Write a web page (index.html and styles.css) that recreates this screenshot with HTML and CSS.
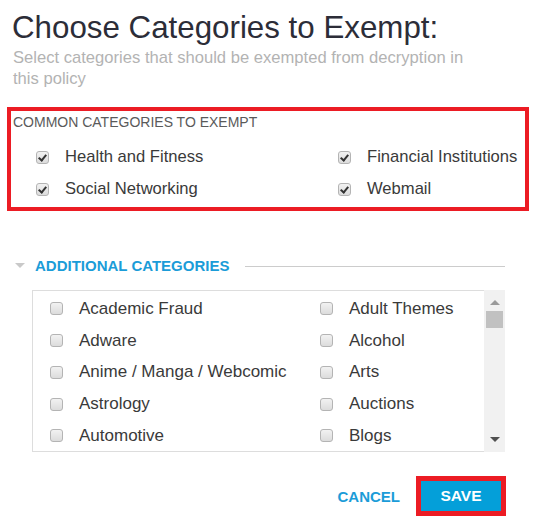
FILE: index.html
```html
<!DOCTYPE html>
<html>
<head>
<meta charset="utf-8">
<link rel="stylesheet" href="styles.css">
</head>
<body>
<div class="dialog">
  <h1 class="title">Choose Categories to Exempt:</h1>
  <p class="subtitle">Select categories that should be exempted from decryption in this policy</p>

  <section class="common">
    <div class="common-label">COMMON CATEGORIES TO EXEMPT</div>
    <div class="common-grid">
      <label class="item"><span class="cb checked"></span><span>Health and Fitness</span></label>
      <label class="item"><span class="cb checked"></span><span>Financial Institutions</span></label>
      <label class="item"><span class="cb checked"></span><span>Social Networking</span></label>
      <label class="item"><span class="cb checked"></span><span>Webmail</span></label>
    </div>
  </section>

  <div class="add-header">
    <span class="caret"></span>
    <span class="add-title">ADDITIONAL CATEGORIES</span>
    <span class="add-line"></span>
  </div>

  <div class="listbox">
    <div class="list-grid">
      <label class="item"><span class="cb"></span><span>Academic Fraud</span></label>
      <label class="item"><span class="cb"></span><span>Adult Themes</span></label>
      <label class="item"><span class="cb"></span><span>Adware</span></label>
      <label class="item"><span class="cb"></span><span>Alcohol</span></label>
      <label class="item"><span class="cb"></span><span>Anime / Manga / Webcomic</span></label>
      <label class="item"><span class="cb"></span><span>Arts</span></label>
      <label class="item"><span class="cb"></span><span>Astrology</span></label>
      <label class="item"><span class="cb"></span><span>Auctions</span></label>
      <label class="item"><span class="cb"></span><span>Automotive</span></label>
      <label class="item"><span class="cb"></span><span>Blogs</span></label>
    </div>
    <div class="scrollbar">
      <span class="arrow-up"></span>
      <span class="thumb"></span>
      <span class="spacer"></span>
      <span class="arrow-down"></span>
    </div>
  </div>

  <div class="actions">
    <span class="cancel">CANCEL</span>
    <span class="highlight"><span class="save">SAVE</span></span>
  </div>
</div>
</body>
</html>
```

FILE: styles.css
```css
* { box-sizing: border-box; }

body {
  margin: 0;
  background: #ffffff;
  font-family: "Liberation Sans", Arial, sans-serif;
  color: #333333;
}

.dialog {
  width: 539px;
  padding-top: 9px;
}

.title {
  margin: 0 0 0 12px;
  font-size: 31.3px;
  line-height: 37px;
  font-weight: normal;
  color: #2c2d38;
}

.subtitle {
  margin: 1px 0 0 13px;
  width: 462px;
  font-size: 16.6px;
  line-height: 21px;
  color: #b3b3b3;
}

.common {
  margin: 18px 0 0 7px;
  width: 522px;
  height: 104px;
  border: 4px solid #ec1c24;
  padding: 3px 0 0 2px;
}

.common-label {
  font-size: 14px;
  line-height: 16px;
  color: #5a5a5a;
}

.common-grid {
  margin: 11px 0 0 23px;
  display: grid;
  grid-template-columns: 302px auto;
  grid-auto-rows: 32px;
}

.item {
  display: flex;
  align-items: center;
  gap: 16px;
  font-size: 16.6px;
  color: #3a3a3a;
  white-space: nowrap;
}

.list-grid .item {
  font-size: 17px;
}

.cb {
  flex: none;
  width: 13px;
  height: 13px;
  border: 1px solid #b4b4b4;
  border-radius: 3px;
  background: linear-gradient(#f2f2f2, #dcdcdc);
  position: relative;
}

.cb.checked::after {
  content: "";
  position: absolute;
  left: 3px;
  top: 1px;
  width: 3px;
  height: 6px;
  border-right: 2px solid #333;
  border-bottom: 2px solid #333;
  transform: rotate(40deg);
}

.add-header {
  margin-top: 44px;
  height: 20px;
  display: flex;
  align-items: center;
  padding-left: 15px;
  padding-right: 34px;
}

.caret {
  width: 0;
  height: 0;
  border-left: 5px solid transparent;
  border-right: 5px solid transparent;
  border-top: 5px solid #c9c9c9;
  margin-right: 10px;
}

.add-title {
  font-size: 15px;
  font-weight: bold;
  color: #1b9cd8;
}

.add-line {
  flex: 1;
  height: 1px;
  background: #cccccc;
  margin-left: 16px;
  margin-top: 2px;
}

.listbox {
  margin: 15px 0 0 32px;
  width: 473px;
  height: 162px;
  border: 1px solid #dddddd;
  border-right: none;
  display: flex;
}

.list-grid {
  flex: 1;
  padding: 2px 0 0 17px;
  display: grid;
  grid-template-columns: 270px auto;
  grid-auto-rows: 31.75px;
  align-content: start;
  overflow: hidden;
}

.scrollbar {
  width: 21px;
  background: #f1f1f1;
  display: flex;
  flex-direction: column;
  align-items: center;
  margin-top: -1px;
  margin-bottom: -1px;
}

.arrow-up {
  margin-top: 10px;
  width: 0;
  height: 0;
  border-left: 5px solid transparent;
  border-right: 5px solid transparent;
  border-bottom: 5px solid #9a9a9a;
}

.thumb {
  margin-top: 6px;
  width: 17px;
  height: 17px;
  background: #c1c1c1;
}

.spacer { flex: 1; }

.arrow-down {
  margin-bottom: 10px;
  width: 0;
  height: 0;
  border-left: 5px solid transparent;
  border-right: 5px solid transparent;
  border-top: 5px solid #505050;
}

.actions {
  margin-top: 24px;
  display: flex;
  justify-content: flex-end;
  align-items: center;
  gap: 16px;
  padding-right: 33px;
}

.cancel {
  font-size: 15px;
  font-weight: bold;
  color: #1b9cd8;
}

.highlight {
  display: block;
  border: 5px solid #ec1c24;
}

.save {
  display: flex;
  align-items: center;
  justify-content: center;
  width: 80px;
  height: 30px;
  background: #049fd9;
  color: #ffffff;
  font-size: 15.5px;
  font-weight: bold;
}
```
